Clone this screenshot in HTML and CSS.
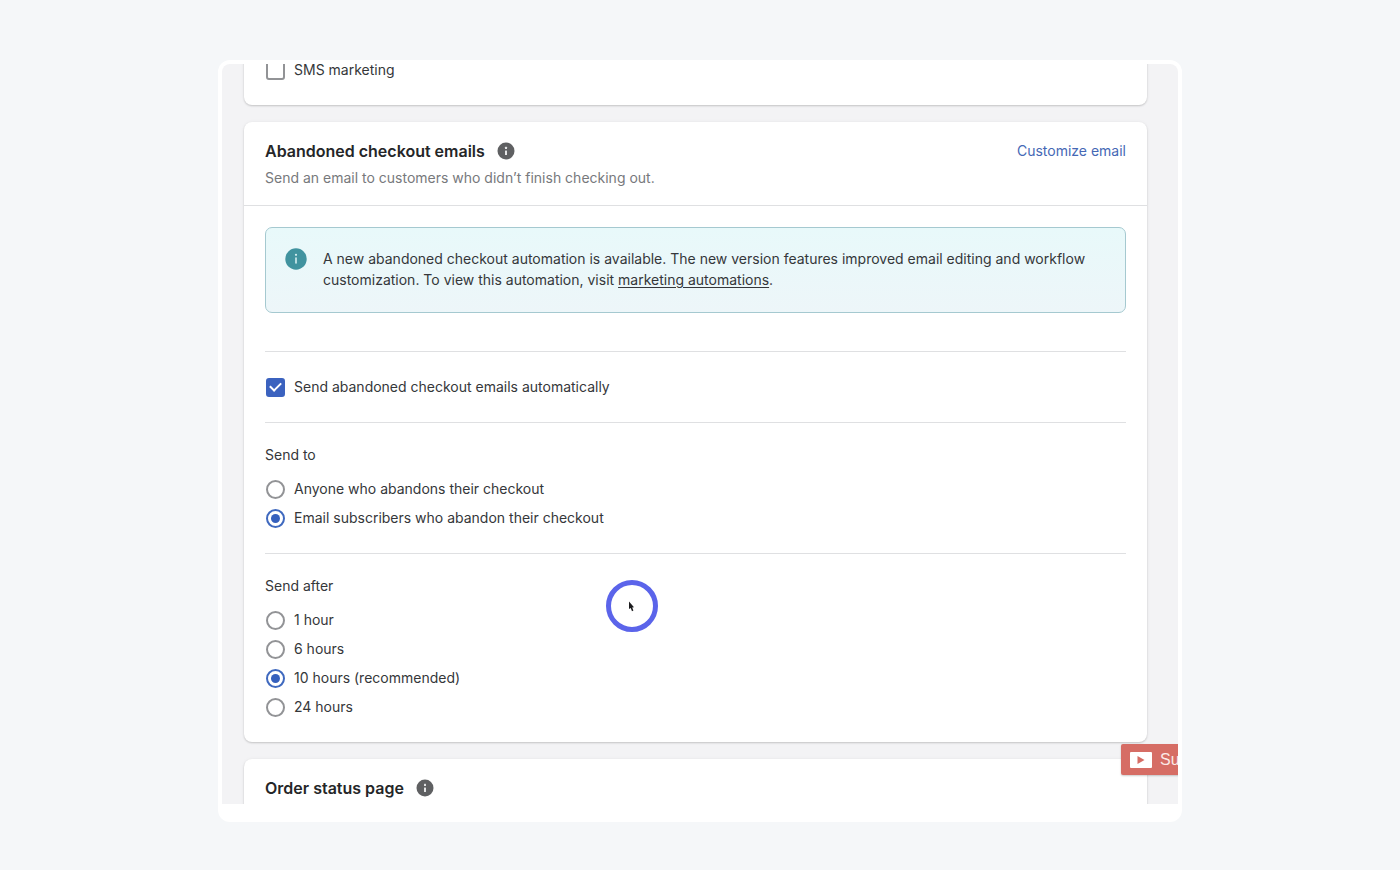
FILE: index.html
```html
<!DOCTYPE html>
<html lang="en">
<head>
<meta charset="utf-8">
<title>Checkout settings</title>
<link rel="stylesheet" href="styles.css">
</head>
<body>
<main class="frame">
  <div class="screen">
    <div class="stack">
      <section class="card card-marketing">
        <label class="option"><input class="checkbox" type="checkbox">SMS marketing</label>
      </section>

      <section class="card">
        <header class="card-header">
          <div class="title-row">
            <h2 class="title">Abandoned checkout emails</h2>
            <svg class="info" viewBox="0 0 18 18" aria-hidden="true"><circle cx="9" cy="9" r="8.5" fill="#5f6062"/><rect x="8" y="4.7" width="2" height="2.2" rx=".5" fill="#e6e6e7"/><rect x="8" y="8.4" width="2" height="4.6" rx=".5" fill="#e6e6e7"/></svg>
            <a class="customize" href="#">Customize email</a>
          </div>
          <p class="subtitle">Send an email to customers who didn’t finish checking out.</p>
        </header>
        <div class="card-body">
          <div class="banner">
            <svg class="banner-icon" viewBox="0 0 22 22" aria-hidden="true"><circle cx="11" cy="11" r="10.7" fill="#41939f"/><circle cx="11" cy="6.8" r="1.1" fill="#d5eef0"/><rect x="10.2" y="9.2" width="1.6" height="6.6" rx=".8" fill="#d5eef0"/></svg>
            <p class="banner-text">A new abandoned checkout automation is available. The new version features improved email editing and workflow customization. To view this automation, visit <a class="banner-link" href="#">marketing automations</a>.</p>
          </div>
          <div class="section section-auto">
            <label class="option"><input class="checkbox" type="checkbox" checked>Send abandoned checkout emails automatically</label>
          </div>
          <fieldset class="section">
            <legend class="legend">Send to</legend>
            <div class="options">
              <label class="option"><input class="radio" type="radio" name="to">Anyone who abandons their checkout</label>
              <label class="option"><input class="radio" type="radio" name="to" checked>Email subscribers who abandon their checkout</label>
            </div>
          </fieldset>
          <fieldset class="section">
            <legend class="legend">Send after</legend>
            <div class="options">
              <label class="option"><input class="radio" type="radio" name="after">1 hour</label>
              <label class="option"><input class="radio" type="radio" name="after">6 hours</label>
              <label class="option"><input class="radio" type="radio" name="after" checked>10 hours (recommended)</label>
              <label class="option"><input class="radio" type="radio" name="after">24 hours</label>
            </div>
          </fieldset>
        </div>
      </section>

      <section class="card">
        <header class="card-header">
          <div class="title-row">
            <h2 class="title">Order status page</h2>
            <svg class="info" viewBox="0 0 18 18" aria-hidden="true"><circle cx="9" cy="9" r="8.5" fill="#5f6062"/><rect x="8" y="4.7" width="2" height="2.2" rx=".5" fill="#e6e6e7"/><rect x="8" y="8.4" width="2" height="4.6" rx=".5" fill="#e6e6e7"/></svg>
          </div>
        </header>
      </section>
    </div>

    <div class="pointer">
      <svg class="cursor" viewBox="0 0 8 12" aria-hidden="true"><path d="M1 1.5 L1 9 L2.7 7.9 L4 11.2 L5.4 10.6 L4.2 7.5 L6 7.2 Z" fill="#1c1c1e"/></svg>
    </div>
    <button class="subscribe" type="button">
      <svg class="play" viewBox="0 0 22 16" aria-hidden="true"><rect width="22" height="16" rx="1" fill="#fff"/><path d="M7.5 4 L14.5 8 L7.5 12 Z" fill="#d66d65"/></svg>
      Subscribe
    </button>
  </div>
</main>
</body>
</html>
```
FILE: styles.css
```css
* {
  box-sizing: border-box;
}

body {
  margin: 0;
  display: flex;
  height: 100vh;
  padding: 60px 218px 48px;
  background: #f5f7f9;
  color: #35373a;
  font: 14px/20px Inter, "Liberation Sans", sans-serif;
}

.frame {
  flex: 1;
  display: flex;
  min-width: 0;
  padding: 4px 4px 18px;
  border-radius: 12px;
  background: #fff;
}

.screen {
  position: relative;
  flex: 1;
  min-width: 0;
  overflow: hidden;
  border-radius: 8px 8px 0 0;
  background: #f3f3f5;
}

/* The list is scrolled past the top edge of the screen. */
.stack {
  display: flex;
  flex-direction: column;
  gap: 17px;
  margin-top: -24px;
  padding: 0 31px 0 22px;
}

.card {
  border-radius: 8px;
  background: #fff;
  box-shadow: 0 1px 2px rgba(0, 0, 0, 0.18), 0 0 4px rgba(0, 0, 0, 0.04);
}

.card-marketing {
  padding: 20px 21px 25px;
}

.card-header {
  padding: 17px 21px;
}

.title-row {
  display: flex;
  align-items: center;
  gap: 12px;
}

.title {
  margin: 0;
  color: #252628;
  font-size: 16px;
  font-weight: 600;
  line-height: 24px;
}

.info {
  width: 18px;
  height: 18px;
}

.customize {
  margin-left: auto;
  color: #4568b5;
  text-decoration: none;
}

.subtitle {
  margin: 5px 0 0;
  color: #77797c;
}

.card-body {
  padding: 21px 21px 0;
  border-top: 1px solid #dfe0e2;
}

.banner {
  display: flex;
  gap: 16px;
  margin-bottom: 38px;
  padding: 20px 19px 22px;
  border: 1px solid #a5c9d0;
  border-radius: 7px;
  background: linear-gradient(#e8f9fa, #edf6f9);
}

.banner-icon {
  flex: none;
  width: 22px;
  height: 22px;
}

.banner-text {
  margin: 0;
  line-height: 21px;
}

.banner-link {
  color: inherit;
  text-underline-offset: 2px;
}

.section {
  min-width: 0;
  margin: 0;
  padding: 22px 0 25px;
  border: 0;
  border-top: 1px solid #dfe0e2;
}

.section-auto {
  padding: 25px 0;
}

.legend {
  float: left;
  width: 100%;
  margin-bottom: 14px;
  padding: 0;
}

.options {
  clear: both;
  display: flex;
  flex-direction: column;
  gap: 9px;
}

.option {
  display: flex;
  align-items: center;
  gap: 9px;
}

.checkbox,
.radio {
  appearance: none;
  flex: none;
  display: grid;
  place-items: center;
  width: 19px;
  height: 19px;
  margin: 0 0 0 1px;
  border: 2px solid #929396;
  background: #fff;
}

.checkbox {
  border-radius: 3px;
}

.checkbox:checked {
  border-color: #3b62bf;
  background: #3b62bf;
}

.checkbox:checked::after {
  content: "";
  width: 9px;
  height: 5px;
  margin-bottom: 3px;
  border: solid #fff;
  border-width: 0 0 2px 2px;
  transform: rotate(-45deg);
}

.radio {
  border-radius: 50%;
}

.radio:checked {
  border-color: #3f69bf;
}

.radio:checked::after {
  content: "";
  width: 9px;
  height: 9px;
  border-radius: 50%;
  background: #3560bd;
}

.pointer {
  position: absolute;
  top: 516px;
  left: 384px;
  display: grid;
  place-items: center;
  width: 52px;
  height: 52px;
  border: 5px solid #5b64ea;
  border-radius: 50%;
}

.cursor {
  width: 8px;
  height: 12px;
}

.subscribe {
  position: absolute;
  top: 680px;
  left: calc(100% - 57px);
  display: flex;
  align-items: center;
  gap: 8px;
  height: 31px;
  padding: 0 9px;
  border: 0;
  border-radius: 2px;
  background: #d66d65;
  box-shadow: 0 1px 2px rgba(0, 0, 0, 0.2);
  color: #fbe9e7;
  font: 16px/20px "Liberation Sans", sans-serif;
  white-space: nowrap;
}

.play {
  flex: none;
  width: 22px;
  height: 16px;
}
```
